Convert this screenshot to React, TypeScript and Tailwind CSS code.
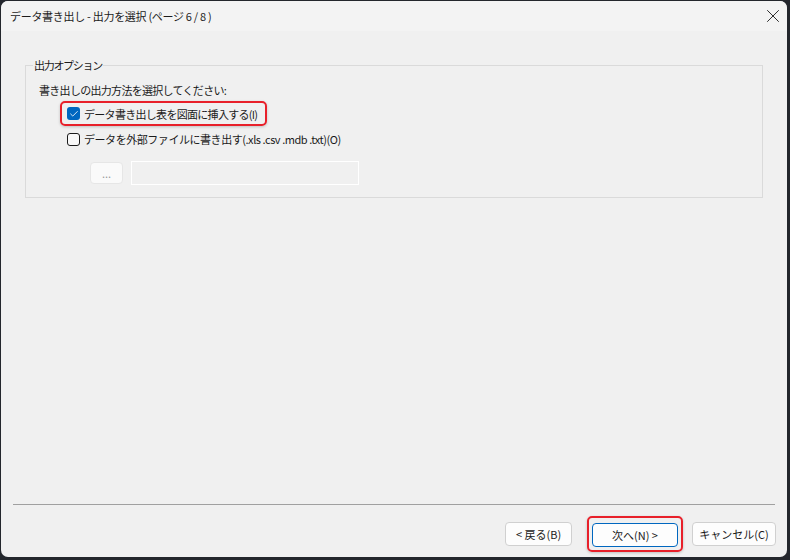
import { X, Check } from "lucide-react";

const font = { fontFamily: '"Noto Sans CJK JP", "Noto Sans", sans-serif' };

function Checkbox({ checked }: { checked: boolean }) {
  if (checked) {
    return (
      <span className="flex h-[13px] w-[13px] shrink-0 items-center justify-center rounded-[3px] bg-[#0067c0]">
        <Check size={10} strokeWidth={2} className="text-white" />
      </span>
    );
  }
  return <span className="block h-[13px] w-[13px] shrink-0 rounded-[3px] border border-[#1b1b1b] bg-[#f9f9f9]" />;
}

const label = "whitespace-nowrap text-[11px] leading-[16px] tracking-[-0.3px] text-[#1b1b1b]";
const body = "whitespace-nowrap text-[11px] leading-[16px] tracking-[-0.7px] text-[#1b1b1b]";
const btn = "h-[24px] rounded-[4px] bg-[#fdfdfd] whitespace-nowrap text-[11px] leading-[16px] text-[#1b1b1b]";

export default function App() {
  return (
    <div className="h-[560px] w-[790px] bg-[#23262c] pl-[1px] pt-[1px]" style={font}>
      <div className="flex h-[556px] w-[786px] flex-col overflow-hidden rounded-[7px] bg-[#f0f0f0]">
        {/* title bar */}
        <div className="flex h-[30px] shrink-0 items-center justify-between bg-[#f3f3f3] pl-[9px] pr-[3px]">
          <span className={label}>データ書き出し - 出力を選択 (ページ 6 / 8 )</span>
          <X size={22} strokeWidth={1} className="text-[#1b1b1b]" />
        </div>

        <div className="flex flex-1 flex-col">
          <fieldset className="ml-[24px] mt-[26px] h-[141px] w-[738px] border border-[#dadada] pl-[13px]">
            <legend className="ml-[-6px] whitespace-nowrap px-[1px] text-[11px] leading-[16px] tracking-[-1.3px] text-[#1b1b1b]">
              出力オプション
            </legend>
            <p className={`mt-[9px] ${body}`}>書き出しの出力方法を選択してください:</p>

            <div className="ml-[21px] mt-[3px] flex h-[25px] w-[207px] items-center gap-[4px] rounded-[5px] border-2 border-[#e8202a] pl-[5px] shadow-[0_1px_3px_rgba(0,0,0,0.2)]">
              <Checkbox checked />
              <span className={body}>データ書き出し表を図面に挿入する(I)</span>
            </div>

            <div className="ml-[28px] mt-[1px] flex h-[24px] items-center gap-[4px]">
              <Checkbox checked={false} />
              <span className="whitespace-nowrap text-[11px] leading-[16px] tracking-[-0.45px] text-[#1b1b1b]">
                データを外部ファイルに書き出す(.xls .csv .mdb .txt)(O)
              </span>
            </div>

            <div className="ml-[51px] mt-[10px] flex items-center gap-[8px]">
              <button className="h-[22px] w-[33px] rounded-[4px] border border-[#e6e6e6] bg-[#fafafa] text-[11px] leading-[14px] text-[#9a9a9a]">
                ...
              </button>
              <div className="h-[24px] w-[228px] border border-white bg-[#f0f0f0]" />
            </div>
          </fieldset>

          <div className="flex-1" />

          <div className="mx-[12px] h-[1px] bg-[#a0a0a0]" />

          {/* wizard buttons */}
          <div className="flex items-center justify-end pb-[5px] pr-[11px] pt-[11px]">
            <button className={`w-[67px] border border-[#d0d0d0] ${btn}`}>&lt; 戻る(B)</button>
            <div className="ml-[15px] mr-[9px] rounded-[5px] border-2 border-[#e8202a] p-[3px] shadow-[0_1px_3px_rgba(0,0,0,0.2)]">
              <button className={`w-[86px] border border-[#0067c0] ${btn}`}>次へ(N) &gt;</button>
            </div>
            <button className={`w-[84px] border border-[#d0d0d0] ${btn}`}>キャンセル(C)</button>
          </div>
        </div>
      </div>
    </div>
  );
}
